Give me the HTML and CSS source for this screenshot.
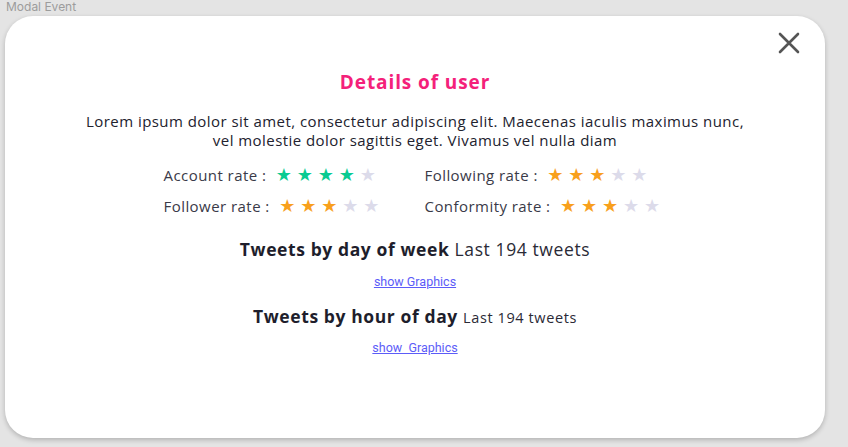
FILE: index.html
```html
<!DOCTYPE html>
<html>
<head>
<meta charset="utf-8">
<link rel="stylesheet" href="styles.css">
</head>
<body>
<div class="label">Modal Event</div>
<div class="modal">
  <button class="close" aria-label="close">
    <svg width="22" height="22" viewBox="0 0 22 22"><path d="M2 2L20 20M20 2L2 20" stroke="#555" stroke-width="2.6" stroke-linecap="round"/></svg>
  </button>
  <h1 class="title">Details of user</h1>
  <p class="desc">Lorem ipsum dolor sit amet, consectetur adipiscing elit. Maecenas iaculis maximus nunc,<br>vel molestie dolor sagittis eget. Vivamus vel nulla diam</p>
  <div class="rates">
    <div class="rate"><span class="rlabel">Account rate :</span><span class="stars green"><i class="on">★</i><i class="on">★</i><i class="on">★</i><i class="on">★</i><i>★</i></span></div>
    <div class="rate"><span class="rlabel">Following rate :</span><span class="stars"><i class="on">★</i><i class="on">★</i><i class="on">★</i><i>★</i><i>★</i></span></div>
    <div class="rate"><span class="rlabel">Follower rate :</span><span class="stars"><i class="on">★</i><i class="on">★</i><i class="on">★</i><i>★</i><i>★</i></span></div>
    <div class="rate"><span class="rlabel">Conformity rate :</span><span class="stars"><i class="on">★</i><i class="on">★</i><i class="on">★</i><i>★</i><i>★</i></span></div>
  </div>
  <h2 class="tw"><b>Tweets by day of week</b> Last 194 tweets</h2>
  <a class="link" href="#">show Graphics</a>
  <h2 class="tw tw2"><b>Tweets by hour of day</b> <span class="small">Last 194 tweets</span></h2>
  <a class="link link2" href="#">show&nbsp; Graphics</a>
</div>
</body>
</html>
```
FILE: styles.css
```css
* { box-sizing: border-box; }
body {
  margin: 0;
  background: #e4e4e4;
  width: 848px;
  height: 447px;
  overflow: hidden;
  font-family: "Open Sans", sans-serif;
}
.label {
  font-family: Inter, sans-serif;
  font-size: 12px;
  line-height: 13px;
  color: #9c9c9c;
  padding-left: 6px;
  height: 16px;
}
.modal {
  position: relative;
  margin-left: 5px;
  width: 820px;
  height: 422px;
  background: #fff;
  border-radius: 28px;
  box-shadow: 0 2px 5px rgba(0,0,0,0.22);
  display: flex;
  flex-direction: column;
  align-items: center;
  padding-top: 53px;
}
.close {
  position: absolute;
  top: 16px;
  right: 25px;
  border: 0;
  background: none;
  padding: 0;
  width: 22px;
  height: 22px;
}
.close svg { display: block; }
.title {
  margin: 0;
  font-size: 19px;
  line-height: 26px;
  font-weight: 700;
  letter-spacing: 0.9px;
  color: #f4217a;
}
.desc {
  margin: 17px 0 0;
  text-align: center;
  font-size: 15px;
  line-height: 19px;
  letter-spacing: 0.45px;
  color: #22222e;
}
.rates {
  margin-top: 13px;
  display: grid;
  grid-template-columns: 261px auto;
  row-gap: 7px;
  padding-right: 4px;
}
.rate {
  display: flex;
  align-items: center;
  height: 24px;
}
.rlabel {
  font-size: 15px;
  letter-spacing: 0.45px;
  color: #3a3a48;
  margin-right: 7px;
}
.stars { display: flex; }
.stars i {
  font-style: normal;
  width: 21px;
  font-size: 18px;
  line-height: 20px;
  text-align: center;
  color: #dcdbea;
  font-family: "DejaVu Sans", sans-serif;
}
.stars i.on { color: #f8a01c; }
.stars.green i.on { color: #0acb92; }
.tw {
  margin: 19px 0 0;
  font-size: 17.5px;
  line-height: 24px;
  font-weight: 400;
  letter-spacing: 0.6px;
  color: #2a2a36;
}
.tw b { font-weight: 700; color: #1e1e2c; }
.tw2 { margin-top: 14px; }
.small { font-size: 14.5px; }
.link {
  margin-top: 13px;
  font-family: Roboto, sans-serif;
  font-size: 12.5px;
  line-height: 16px;
  color: #5c5cf8;
}
.link2 { margin-top: 10px; }
```
